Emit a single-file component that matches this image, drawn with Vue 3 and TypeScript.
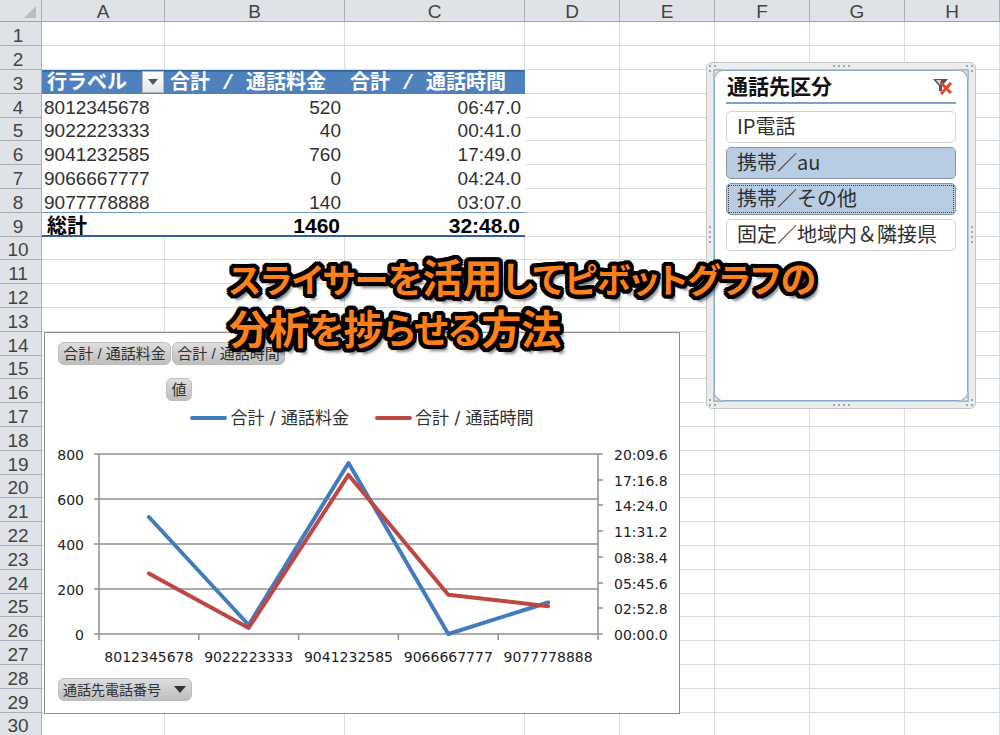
<script setup lang="ts">
import { ref } from 'vue'

interface Row {
  n: number
  kind: string
  cells: string[]
}

const columns = ['A', 'B', 'C', 'D', 'E', 'F', 'G', 'H']

const pivot: Record<number, { kind: string; cells: string[] }> = {
  3: { kind: 'head', cells: ['行ラベル', '合計 / 通話料金', '合計 / 通話時間'] },
  4: { kind: 'data', cells: ['8012345678', '520', '06:47.0'] },
  5: { kind: 'data', cells: ['9022223333', '40', '00:41.0'] },
  6: { kind: 'data', cells: ['9041232585', '760', '17:49.0'] },
  7: { kind: 'data', cells: ['9066667777', '0', '04:24.0'] },
  8: { kind: 'data last', cells: ['9077778888', '140', '03:07.0'] },
  9: { kind: 'total', cells: ['総計', '1460', '32:48.0'] },
}

const rows: Row[] = Array.from({ length: 30 }, (_, i) => {
  const p = pivot[i + 1]
  return { n: i + 1, kind: p ? p.kind : '', cells: columns.map((_c, k) => (p && p.cells[k]) || '') }
})

const slicerItems = ref([
  { label: 'IP電話', on: false },
  { label: '携帯／au', on: true },
  { label: '携帯／その他', on: true },
  { label: '固定／地域内＆隣接県', on: false },
])
const focused = ref(2)

function toggle(i: number) {
  slicerItems.value[i].on = !slicerItems.value[i].on
  focused.value = i
}
function clearFilter() {
  slicerItems.value.forEach((s) => (s.on = true))
}

const plot = { left: 54, right: 553, top: 16, bottom: 196 }
const categories = ['8012345678', '9022223333', '9041232585', '9066667777', '9077778888']
const step = (plot.right - plot.left) / categories.length
const height = plot.bottom - plot.top
const centre = (i: number) => plot.left + step * (i + 0.5)
const line = (values: number[], max: number) =>
  values.map((v, i) => `${centre(i)},${plot.bottom - (v / max) * height}`).join(' ')

const feeLine = line([520, 40, 760, 0, 140], 800)
const timeLine = line([407, 41, 1069, 264, 187], 1209.6)
const leftTicks = [800, 600, 400, 200, 0].map((v, i) => ({ label: String(v), y: plot.top + (height / 4) * i }))
const rightTicks = ['20:09.6', '17:16.8', '14:24.0', '11:31.2', '08:38.4', '05:45.6', '02:52.8', '00:00.0'].map(
  (label, i) => ({ label, y: Math.round(plot.top + (height / 7) * i) }),
)
const corners = ['tl', 'tr', 'bl', 'br']
const sides = ['top', 'bottom', 'left', 'right']
</script>

<template>
  <main class="sheet">
    <table class="grid">
      <colgroup>
        <col class="c-num" />
        <col class="c-a" />
        <col class="c-b" />
        <col class="c-b" />
        <col v-for="k in 4" :key="k" class="c-d" />
        <col />
      </colgroup>
      <thead>
        <tr>
          <th class="corner">
            <svg width="12" height="12" viewBox="0 0 12 12" aria-hidden="true"><path d="M12 0V12H0Z" fill="#b9bdc2" /></svg>
          </th>
          <th v-for="c in columns" :key="c" scope="col">{{ c }}</th>
        </tr>
      </thead>
      <tbody>
        <tr v-for="r in rows" :key="r.n" :class="r.kind">
          <th scope="row">{{ r.n }}</th>
          <td v-for="(cell, k) in r.cells" :key="k" :class="{ piv: r.kind && k < 3, num: k > 0 }">
            {{ cell }}
            <button v-if="r.n === 3 && k === 0" class="filter" type="button" aria-label="フィルター">
              <svg width="10" height="6" viewBox="0 0 10 6"><path d="M0 0H10L5 6Z" fill="#555" /></svg>
            </button>
          </td>
        </tr>
      </tbody>
    </table>

    <section class="chart">
      <div class="pills">
        <button class="pill" type="button">合計 / 通話料金</button>
        <button class="pill" type="button">合計 / 通話時間</button>
      </div>
      <button class="pill value" type="button">値</button>
      <div class="legend">
        <span class="key"><i class="swatch fee"></i>合計 / 通話料金</span>
        <span class="key"><i class="swatch time"></i>合計 / 通話時間</span>
      </div>
      <svg class="plot" viewBox="0 0 634 232">
        <g stroke="#8e8e8e" stroke-width="1.5" fill="none">
          <path v-for="t in leftTicks" :key="t.label" :d="`M${plot.left - 5} ${t.y}H${plot.right}`" />
          <path v-for="t in rightTicks" :key="t.label" :d="`M${plot.right} ${t.y}h5`" />
          <path :d="`M${plot.left} ${plot.top}V${plot.bottom + 6}M${plot.right} ${plot.top}V${plot.bottom + 6}`" />
          <path v-for="k in 4" :key="k" :d="`M${plot.left + step * k} ${plot.bottom}v6`" />
        </g>
        <g fill="none" stroke-width="4" stroke-linecap="round" stroke-linejoin="round">
          <polyline :points="feeLine" stroke="#437bbd" />
          <polyline :points="timeLine" stroke="#be4744" />
        </g>
        <g class="axis">
          <text v-for="t in leftTicks" :key="t.label" x="39" :y="t.y + 6" text-anchor="end">{{ t.label }}</text>
          <text v-for="t in rightTicks" :key="t.label" x="569" :y="t.y + 6">{{ t.label }}</text>
          <text v-for="(c, i) in categories" :key="c" :x="centre(i)" y="224" text-anchor="middle">{{ c }}</text>
        </g>
      </svg>
      <button class="pill field" type="button">
        通話先電話番号
        <svg width="12" height="7" viewBox="0 0 12 7"><path d="M0 0H12L6 7Z" fill="#333" /></svg>
      </button>
    </section>

    <section class="slicer">
      <svg v-for="c in corners" :key="c" class="grip" :class="c" width="20" height="20" viewBox="0 0 20 20">
        <path d="M8 8H18A10 10 0 0 0 8 18Z" fill="#ececec" />
        <path d="M8 18V8H18" fill="none" stroke="#86a6cb" />
        <path d="M8 18A10 10 0 0 1 18 8" fill="none" stroke="#b5b9bd" stroke-width="1.5" />
        <path d="M3 3h2v2h-2zM8 3h2v2h-2zM3 8h2v2h-2z" fill="#a4a7aa" />
      </svg>
      <span v-for="s in sides" :key="s" class="dots" :class="s"><i v-for="k in 4" :key="k"></i></span>
      <div class="panel">
        <header class="title">
          <h2>通話先区分</h2>
          <button class="clear" type="button" aria-label="フィルターのクリア" @click="clearFilter">
            <svg width="20" height="18" viewBox="0 0 20 18">
              <path d="M0 1H15L9 8V13H6V8Z" fill="#555" />
              <path d="M3 2H8L7 7Z" fill="#d5d5d5" />
              <path d="M8 5L18 15M18 5L8 16" stroke="#e8452c" stroke-width="3" fill="none" />
            </svg>
          </button>
        </header>
        <button
          v-for="(s, i) in slicerItems"
          :key="s.label"
          type="button"
          class="item"
          :class="{ on: s.on, focus: focused === i }"
          :aria-pressed="s.on"
          @click="toggle(i)"
        >
          <span>{{ s.label }}</span>
        </button>
      </div>
    </section>

    <h1 class="caption">
      <span class="kata">スライサー</span><span class="hira">を</span>活用<span class="hira">して</span><span class="kata">ピボットグラフ</span><span class="hira">の</span><br />分析<span class="hira">を</span>捗<span class="hira">らせる</span>方法
    </h1>
  </main>
</template>

<style>
body {
  margin: 0;
  background: #fff;
}
</style>

<style scoped>
.sheet {
  position: relative;
  height: 100vh;
  min-width: 1000px;
  overflow: hidden;
  color: #303030;
  font-family: 'Liberation Sans', 'Noto Sans CJK JP', sans-serif;
}
button {
  margin: 0;
  padding: 0;
  color: inherit;
  font: inherit;
  cursor: pointer;
}
svg {
  display: block;
}

.grid {
  width: 100%;
  table-layout: fixed;
  border-collapse: separate;
  border-spacing: 0;
  font-size: 19px;
  line-height: 18px;
}
.c-num { width: 42px; }
.c-a { width: 123px; }
.c-b { width: 180px; }
.c-d { width: 95px; }
.grid th,
.grid td {
  box-sizing: border-box;
  height: 24px;
  padding: 4px 3px 0 2px;
  border-right: 1px solid #dadddf;
  border-bottom: 1px solid #dadddf;
  vertical-align: bottom;
  white-space: nowrap;
  font-weight: 400;
}
.grid tr:nth-child(5n) > * {
  height: 23px;
}
.grid th {
  background: #dfe2e7;
  border-color: #a9aeb5;
  color: #444;
}
.grid thead th {
  height: 22px;
  padding: 3px 0 0;
  border-bottom-color: #9da2a9;
}
.grid tbody th {
  padding-right: 7px;
  text-align: center;
}
.grid .corner svg {
  margin: 0 5px 3px auto;
}
.num {
  text-align: right;
}
.grid td.piv {
  padding-right: 4px;
  border-right: 0;
  border-bottom-color: transparent;
}
.head .piv {
  position: relative;
  background: #4f81bd;
  color: #fff;
  font: bold 20px/18px 'Liberation Mono', 'Noto Sans CJK JP', monospace;
  text-align: left;
  box-shadow: inset 0 2px #386aa5;
}
.grid .head .piv {
  padding: 3px 0 1px 5px;
  border: 0;
  font-weight: 700;
}
.grid .last .piv {
  border-bottom-color: #6c96c5;
}
.grid .total .piv {
  padding: 3px 5px 0;
  border-bottom: 2px solid #2d609b;
  color: #000;
  font-size: 20px;
  font-weight: 700;
}
.grid .total .num {
  font-size: 21px;
}
.filter {
  position: absolute;
  top: 1px;
  right: 1px;
  display: grid;
  place-items: center;
  width: 22px;
  height: 22px;
  border: 1px solid #b4b8bd;
  background: linear-gradient(#fff, #e3e6ea);
}

.chart {
  position: absolute;
  top: 332px;
  left: 44px;
  box-sizing: border-box;
  width: 636px;
  padding: 9px 0 12px;
  border: 1px solid #8e8e8e;
  background: #fff;
}
.pills {
  display: flex;
  gap: 1px;
  padding-left: 13px;
}
.pill {
  display: block;
  box-sizing: border-box;
  width: 113px;
  height: 23px;
  border: 1px solid #bdbdbd;
  border-radius: 6px;
  background: linear-gradient(#dedede, #bebebe);
  font-size: 15px;
  line-height: 20px;
  white-space: nowrap;
}
.value {
  width: 26px;
  margin: 13px 0 0 121px;
}
.field {
  display: flex;
  align-items: center;
  justify-content: space-between;
  width: 134px;
  margin: 8px 0 0 13px;
  padding: 0 5px 0 4px;
  font-size: 14px;
}
.legend {
  display: flex;
  justify-content: center;
  gap: 26px;
  margin-top: 7px;
  font: 17px/20px 'DejaVu Sans', 'Noto Sans CJK JP', sans-serif;
}
.key {
  display: flex;
  align-items: center;
  gap: 3px;
}
.swatch {
  width: 37px;
  height: 4px;
  border-radius: 2px;
}
.fee { background: #437bbd; }
.time { background: #be4744; }
.plot {
  width: 100%;
  margin-top: 10px;
}
.axis {
  fill: #222;
  font: 14px 'DejaVu Sans', sans-serif;
}

.slicer {
  position: absolute;
  top: 62px;
  left: 706px;
  box-sizing: border-box;
  width: 270px;
  padding: 7px;
  border: 1px solid #c3c7c8;
  border-radius: 6px;
  background: #ebecec;
}
.panel {
  display: flex;
  flex-direction: column;
  gap: 4px;
  box-sizing: border-box;
  min-height: 331px;
  padding: 0 11px;
  border: 1px solid #86a6cb;
  background: #fff;
  box-shadow: 0 0 0 1px #b8cade;
}
.title {
  display: flex;
  align-items: center;
  justify-content: space-between;
  height: 31px;
  margin-bottom: 3px;
  padding: 0 3px 0 1px;
  border-bottom: 2px solid #79a1d2;
}
.title h2 {
  margin: 0;
  color: #111;
  font-size: 21px;
  line-height: 28px;
}
.clear {
  border: 0;
  background: none;
}
.item {
  box-sizing: border-box;
  height: 32px;
  padding: 1px;
  border: 1px solid #cfd1d3;
  border-radius: 5px;
  background: #fff;
  font: 20px/24px 'Noto Sans CJK JP', sans-serif;
  text-align: left;
}
.item span {
  display: block;
  padding: 0 0 2px 8px;
  border: 1px solid transparent;
}
.item.on {
  border-color: #8e959e;
  background: #b8cce4;
}
.item.focus span {
  border: 1px dotted #444;
}
.grip {
  position: absolute;
}
.tl { top: -1px; left: -1px; }
.tr { top: -1px; right: -1px; transform: scaleX(-1); }
.bl { bottom: -1px; left: -1px; transform: scaleY(-1); }
.br { right: -1px; bottom: -1px; transform: scale(-1); }
.dots {
  position: absolute;
  display: flex;
  gap: 3px;
}
.dots i {
  width: 2px;
  height: 2px;
  background: #a4a7aa;
}
.dots.top,
.dots.bottom {
  left: 126px;
}
.top { top: 2px; }
.bottom { bottom: 2px; }
.dots.left,
.dots.right {
  top: 163px;
  flex-direction: column;
}
.left { left: 2px; }
.right { right: 2px; }

.caption {
  position: absolute;
  top: 252px;
  left: 229px;
  margin: 0;
  color: #ff7f18;
  font: bold 40px/48px 'Noto Sans CJK JP', sans-serif;
  font-feature-settings: 'palt';
  white-space: nowrap;
  text-shadow:
    4px 0 #000, -4px 0 #000, 0 4px #000, 0 -4px #000,
    3px 3px #000, -3px 3px #000, 3px -3px #000, -3px -3px #000,
    4px 2px #000, -4px 2px #000, 4px -2px #000, -4px -2px #000,
    2px 4px #000, -2px 4px #000, 2px -4px #000, -2px -4px #000,
    2px 0 #000, -2px 0 #000, 0 2px #000, 0 -2px #000,
    4px 6px 3px rgba(0, 0, 0, 0.5);
}
.hira { font-size: 36px; }
.kata { font-size: 34px; }
</style>
